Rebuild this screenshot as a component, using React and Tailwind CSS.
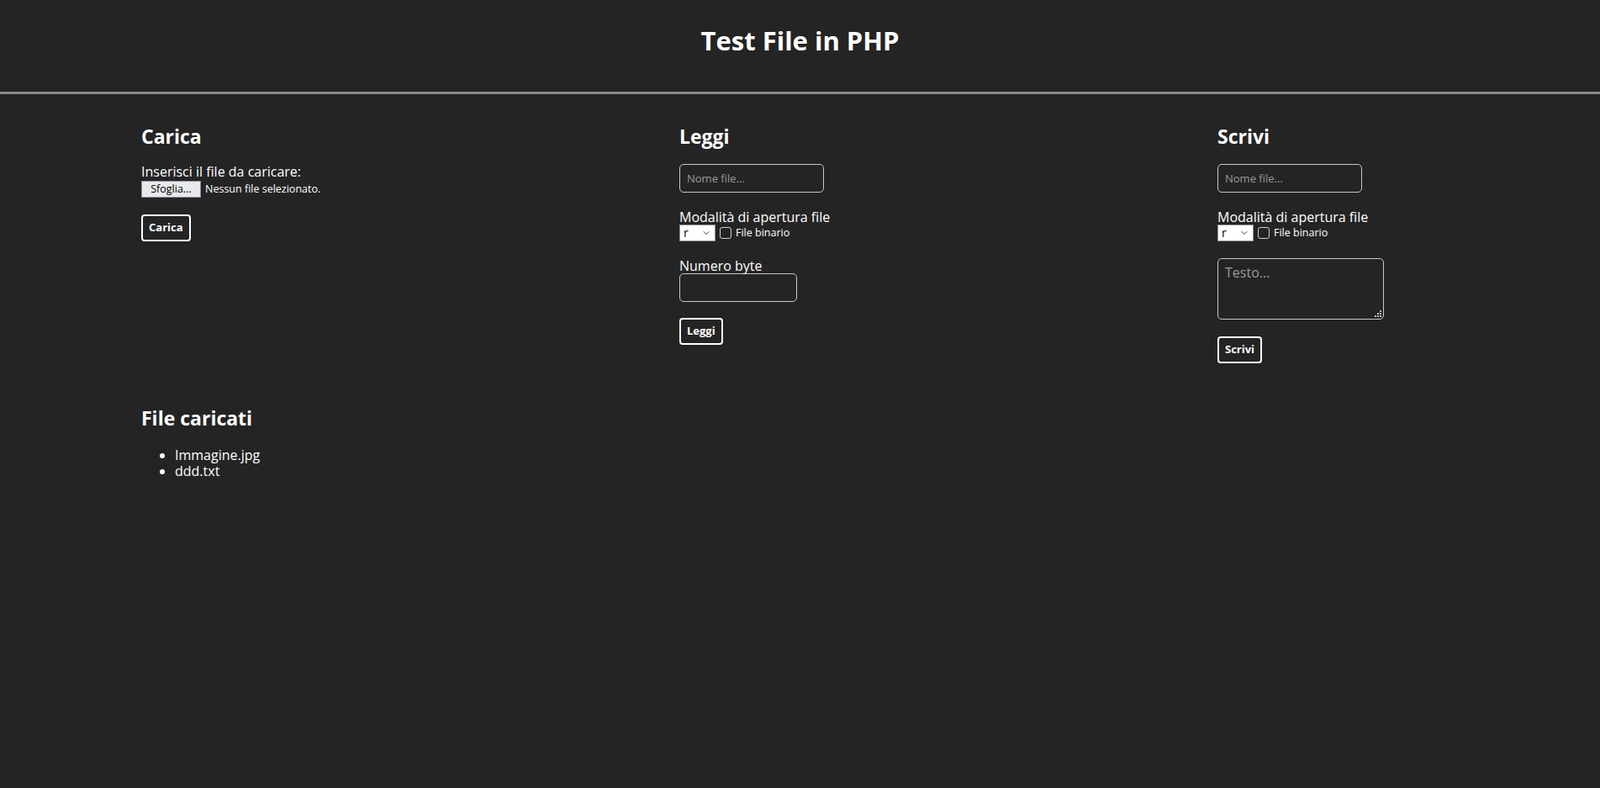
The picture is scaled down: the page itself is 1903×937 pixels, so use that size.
import { ChevronDown } from "lucide-react";

const font = { fontFamily: "'Open Sans', Lato, sans-serif" };

const FileModeRow = () => (
  <div className="flex items-center gap-[5px] text-[12.5px] leading-[20px]">
    <div className="relative flex items-center w-[43px] h-[20px] bg-white border border-[#8f8f9d] text-black pl-[4px]">
      <span className="text-[14px] leading-none">r</span>
      <ChevronDown className="absolute right-[4px] w-[12px] h-[12px] text-[#444]" strokeWidth={2} />
    </div>
    <span className="w-[14px] h-[14px] rounded-[3px] border border-[#d0d0d0] bg-[#242424]" />
    <span className="text-white">File binario</span>
  </div>
);

const TextInput = ({ placeholder }) => (
  <input
    type="text"
    placeholder={placeholder}
    className="block w-[172px] h-[34px] rounded-[5px] border border-[#c8c8c8] bg-transparent px-[8px] text-[13px] text-white placeholder:text-[#9a9a9a] outline-none"
  />
);

const Btn = ({ children }) => (
  <button className="h-[32px] px-[7px] rounded-[4px] border-2 border-white bg-transparent text-white text-[13px] font-bold">
    {children}
  </button>
);

export default function App() {
  return (
    <div className="min-h-screen bg-[#242424] text-white" style={font}>
      <header className="h-[112px] border-b-[3px] border-[#8a8a8a] flex justify-center pt-[28px]">
        <h1 className="text-[31px] font-bold leading-[40px]">Test File in PHP</h1>
      </header>

      <main className="pl-[168px] pt-[35px]">
        <div className="grid grid-cols-[640px_640px_1fr]">
          {/* Carica */}
          <section>
            <h2 className="text-[23px] font-bold leading-[30px]">Carica</h2>
            <div className="mt-[18px] text-[16px] leading-[18px]">Inserisci il file da caricare:</div>
            <div className="flex items-center gap-[5px] mt-[2px] text-[12.5px]">
              <span className="h-[20px] w-[71px] flex items-center justify-center bg-[#e9e9ed] border border-[#8f8f9d] text-black">Sfoglia...</span>
              <span>Nessun file selezionato.</span>
            </div>
            <div className="mt-[20px]">
              <Btn>Carica</Btn>
            </div>
          </section>

          {/* Leggi */}
          <section>
            <h2 className="text-[23px] font-bold leading-[30px]">Leggi</h2>
            <div className="mt-[18px]">
              <TextInput placeholder="Nome file..." />
            </div>
            <div className="mt-[20px] text-[16px] leading-[18px]">Modalità di apertura file</div>
            <FileModeRow />
            <div className="mt-[20px] text-[16px] leading-[18px]">Numero byte</div>
            <input
              type="text"
              className="block w-[140px] h-[34px] rounded-[5px] border border-[#c8c8c8] bg-transparent outline-none"
            />
            <div className="mt-[19px]">
              <Btn>Leggi</Btn>
            </div>
          </section>

          {/* Scrivi */}
          <section>
            <h2 className="text-[23px] font-bold leading-[30px]">Scrivi</h2>
            <div className="mt-[18px]">
              <TextInput placeholder="Nome file..." />
            </div>
            <div className="mt-[20px] text-[16px] leading-[18px]">Modalità di apertura file</div>
            <FileModeRow />
            <div className="relative mt-[20px] w-[198px] h-[73px]">
              <textarea
                placeholder="Testo..."
                className="block w-full h-full resize-none rounded-[5px] border border-[#c8c8c8] bg-transparent px-[8px] py-[6px] text-[16px] leading-[20px] text-white placeholder:text-[#9a9a9a] outline-none"
              />
              <svg className="absolute right-[3px] bottom-[3px] w-[8px] h-[8px]" viewBox="0 0 8 8" fill="#bdbdbd">
                <rect x="6" y="0" width="2" height="2" />
                <rect x="3" y="3" width="2" height="2" />
                <rect x="6" y="3" width="2" height="2" />
                <rect x="0" y="6" width="2" height="2" />
                <rect x="3" y="6" width="2" height="2" />
                <rect x="6" y="6" width="2" height="2" />
              </svg>
            </div>
            <div className="mt-[20px]">
              <Btn>Scrivi</Btn>
            </div>
          </section>
        </div>

        <section className="mt-[50px]">
          <h2 className="text-[23px] font-bold leading-[30px]">File caricati</h2>
          <ul className="list-disc pl-[40px] mt-[20px] text-[16px] leading-[19px]">
            <li>Immagine.jpg</li>
            <li>ddd.txt</li>
          </ul>
        </section>
      </main>
    </div>
  );
}
